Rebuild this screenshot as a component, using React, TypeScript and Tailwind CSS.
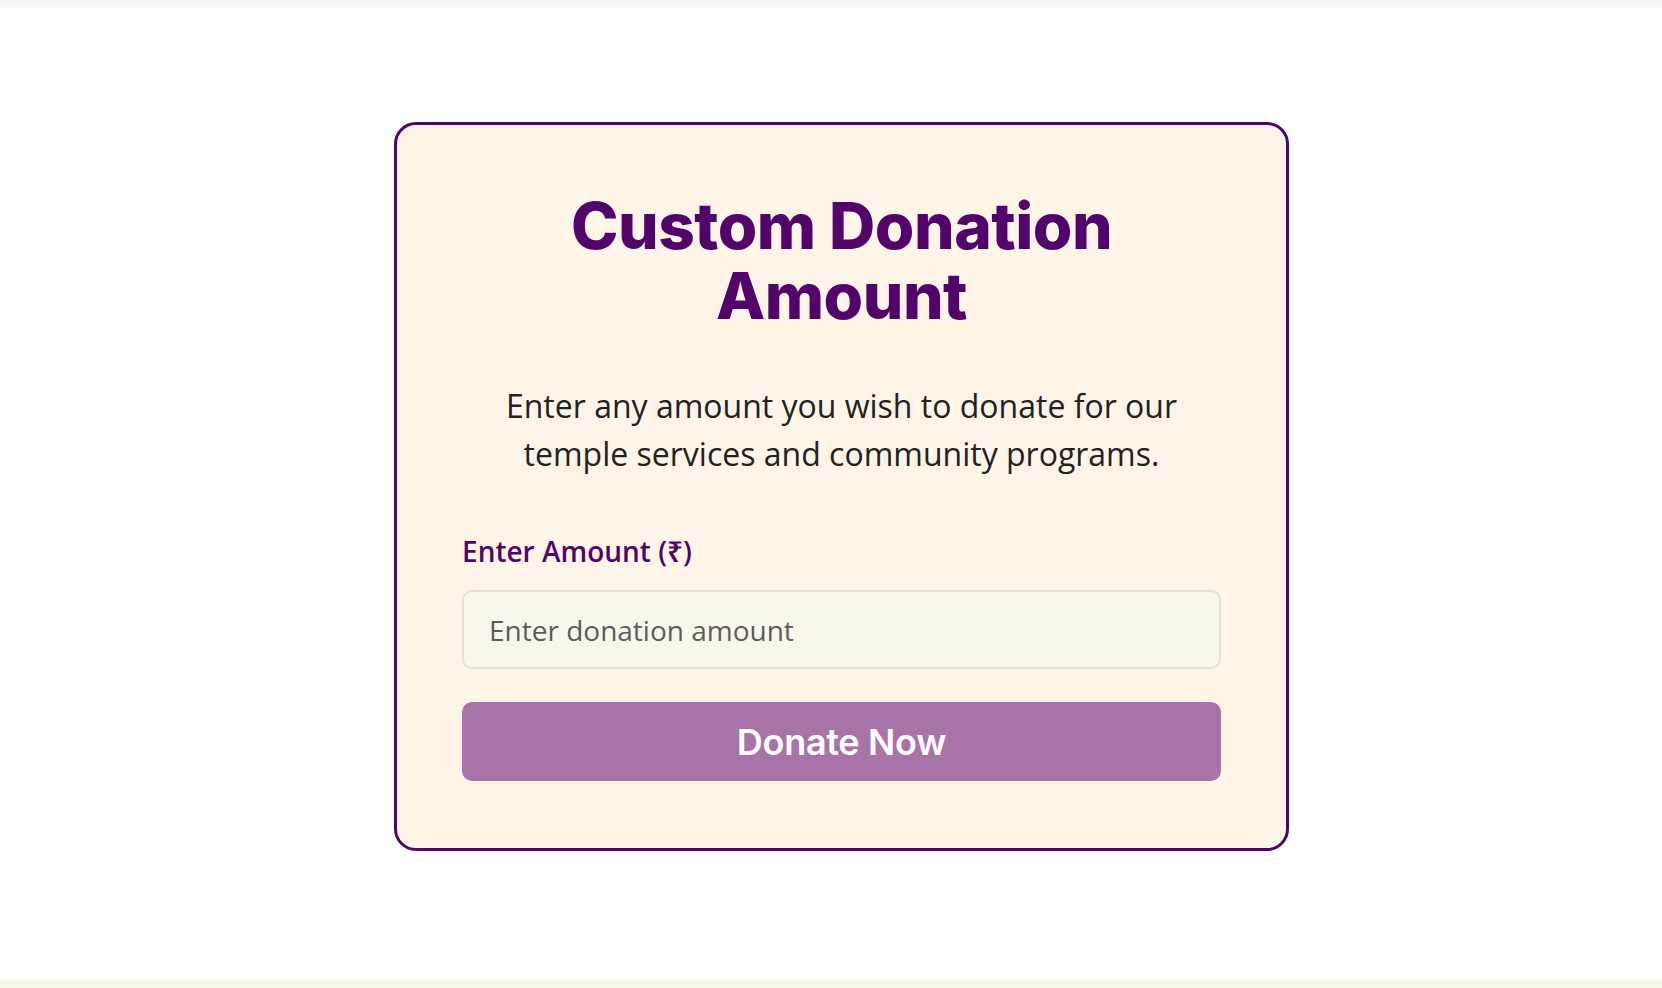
import React, { useState } from 'react';

const DonationCard: React.FC = () => {
  const [amount, setAmount] = useState('');

  return (
    <div className="w-[895px] rounded-[22px] border-[3px] border-[#52046a] bg-[#fef4e8] px-[65px] pt-[66px] pb-[67px]">
      <h2 className="text-center font-['Inter',sans-serif] text-[64px] leading-[70px] font-extrabold tracking-[-0.5px] text-[#52046a]">
        Custom Donation
        <br />
        Amount
      </h2>

      <p className="mt-[51px] text-center font-['Open_Sans',sans-serif] text-[32px] leading-[48px] text-[#222222]">
        Enter any amount you wish to donate for our
        <br />
        temple services and community programs.
      </p>

      <label
        htmlFor="amount"
        className="mt-[53px] block font-['Open_Sans','Noto_Sans',sans-serif] text-[28px] leading-[40px] font-semibold text-[#52046a]"
      >
        Enter Amount (₹)
      </label>

      <input
        id="amount"
        type="number"
        value={amount}
        onChange={(e) => setAmount(e.target.value)}
        placeholder="Enter donation amount"
        className="mt-[19px] block h-[79px] w-full rounded-[10px] border-2 border-[#e3e0da] bg-[#f9f7ec] px-[25px] font-['Open_Sans',sans-serif] text-[28px] text-[#333] outline-none placeholder:text-[#5c5c5c]"
      />

      <button
        type="button"
        className="mt-[33px] flex h-[79px] w-full items-center justify-center rounded-[10px] bg-[#a873a7] font-['Inter',sans-serif] text-[36px] font-semibold tracking-[-0.3px] text-white"
      >
        Donate Now
      </button>
    </div>
  );
};

export default function App() {
  return (
    <div className="min-h-screen bg-white">
      {/* header shadow bleeding in */}
      <div className="h-[10px] bg-gradient-to-b from-[#f2f2f2] to-white" />

      <section className="flex justify-center pt-[112px] pb-[128px] pl-[21px]">
        <DonationCard />
      </section>

      <footer className="h-[40px] bg-[#f8f5e9]" />
    </div>
  );
}
